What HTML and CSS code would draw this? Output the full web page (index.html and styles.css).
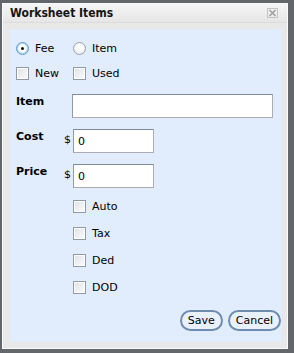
FILE: index.html
```html
<!DOCTYPE html>
<html lang="en">
<head>
<meta charset="utf-8">
<title>Worksheet Items</title>
<link rel="stylesheet" href="styles.css">
</head>
<body>
<div class="dialog">
	<div class="titlebar">
		<span class="title">Worksheet Items</span>
		<span class="close">
			<svg width="11" height="10" viewBox="0 0 11 10">
				<rect x="0.5" y="0.5" width="10" height="9" fill="none" stroke="#c4c4c4"/>
				<path d="M2.5 2 L8.5 8 M8.5 2 L2.5 8" stroke="#a0a0a0" stroke-width="1.6"/>
			</svg>
		</span>
	</div>
	<div class="panel">
		<div class="pair">
			<label class="opt"><span class="radio on"></span>Fee</label>
			<label class="opt"><span class="radio"></span>Item</label>
		</div>
		<div class="pair pair_chk">
			<label class="opt"><span class="chk"></span>New</label>
			<label class="opt"><span class="chk"></span>Used</label>
		</div>
		<div class="field field_item">
			<span class="lbl">Item</span>
			<span class="box box_wide"></span>
		</div>
		<div class="field">
			<span class="lbl">Cost</span>
			<span class="cur">$</span>
			<span class="box">0</span>
		</div>
		<div class="field">
			<span class="lbl">Price</span>
			<span class="cur">$</span>
			<span class="box">0</span>
		</div>
		<ul class="flags">
			<li><span class="chk"></span>Auto</li>
			<li><span class="chk"></span>Tax</li>
			<li><span class="chk"></span>Ded</li>
			<li><span class="chk"></span>DOD</li>
		</ul>
		<div class="btns">
			<button class="btn">Save</button>
			<button class="btn">Cancel</button>
		</div>
	</div>
</div>
</body>
</html>
```

FILE: styles.css
```css
* {margin:0; padding:0; box-sizing:border-box}
li {list-style:none}
body {
	background-color:#63676b;
	padding:3px 0 0 2px;
	font-family:"DejaVu Sans", Verdana, sans-serif;
	font-size:11px;
	color:#000;
}

.dialog {
	width:286px;
	height:346px;
	background-color:#e8e8e8;
	border:1px solid #fbfbfb;
	display:flex;
	flex-direction:column;
}
.titlebar {
	height:19px;
	background:linear-gradient(#f5f5f5, #e6e6e6);
	border-bottom:1px solid #dcdcdc;
	display:flex;
	align-items:center;
	justify-content:space-between;
	padding:0 9px 0 7px;
}
.title {
	font-family:"DejaVu Sans Condensed", "DejaVu Sans", sans-serif;
	font-weight:bold;
	font-size:12px;
	color:#151515;
}
.close svg {display:block}

.panel {
	flex:1;
	margin:6px 5px 6px 7px;
	background-color:#e1edfd;
	padding:13px 0 0 6px;
	display:flex;
	flex-direction:column;
}

.pair {
	display:flex;
	height:13px;
	align-items:center;
}
.pair_chk {margin-top:12px}
.opt {
	display:flex;
	align-items:center;
	width:57px;
	gap:6px;
}
.radio {
	width:13px;
	height:13px;
	border-radius:50%;
	border:1px solid #9aa3ab;
	background:radial-gradient(circle at 50% 40%, #fff 30%, #dde2e6 100%);
	position:relative;
}
.radio.on {
	border-color:#5c9ccf;
	box-shadow:0 0 0 1px #a8d0ef inset;
}
.radio.on::after {
	content:"";
	position:absolute;
	left:4px;
	top:4px;
	width:3px;
	height:3px;
	border-radius:50%;
	background-color:#111;
}
.chk {
	width:13px;
	height:13px;
	border:1px solid #8f9aa4;
	background:linear-gradient(135deg, #dfe3e7, #fbfbfb);
	box-shadow:0 0 0 1px #fff inset;
}

.field {
	display:flex;
	align-items:flex-start;
	margin-top:11px;
	height:24px;
}
.field_item {margin-top:14px}
.lbl {
	width:48px;
	font-weight:bold;
	padding-top:1px;
}
.cur {
	width:9px;
	padding-top:4px;
}
.field_item .lbl {width:56px}
.box {
	display:block;
	width:81px;
	height:24px;
	background-color:#fff;
	border:1px solid #abadb3;
	border-top-color:#7d8b99;
	border-left-color:#8f9aa6;
	padding:5px 0 0 4px;
}
.box_wide {width:201px}

.flags {
	margin:12px 0 0 57px;
}
.flags li {
	display:flex;
	align-items:center;
	gap:6px;
	height:13px;
	margin-bottom:14px;
}

.btns {
	margin-top:auto;
	margin-bottom:11px;
	display:flex;
	justify-content:flex-end;
	gap:5px;
	padding-right:1px;
}
.btn {
	font-family:"DejaVu Sans", Verdana, sans-serif;
	font-size:11px;
	height:21px;
	padding:0 6px;
	border:2px solid #6f8bad;
	border-radius:11px;
	background-color:#e8f1fd;
	color:#000;
}
```
